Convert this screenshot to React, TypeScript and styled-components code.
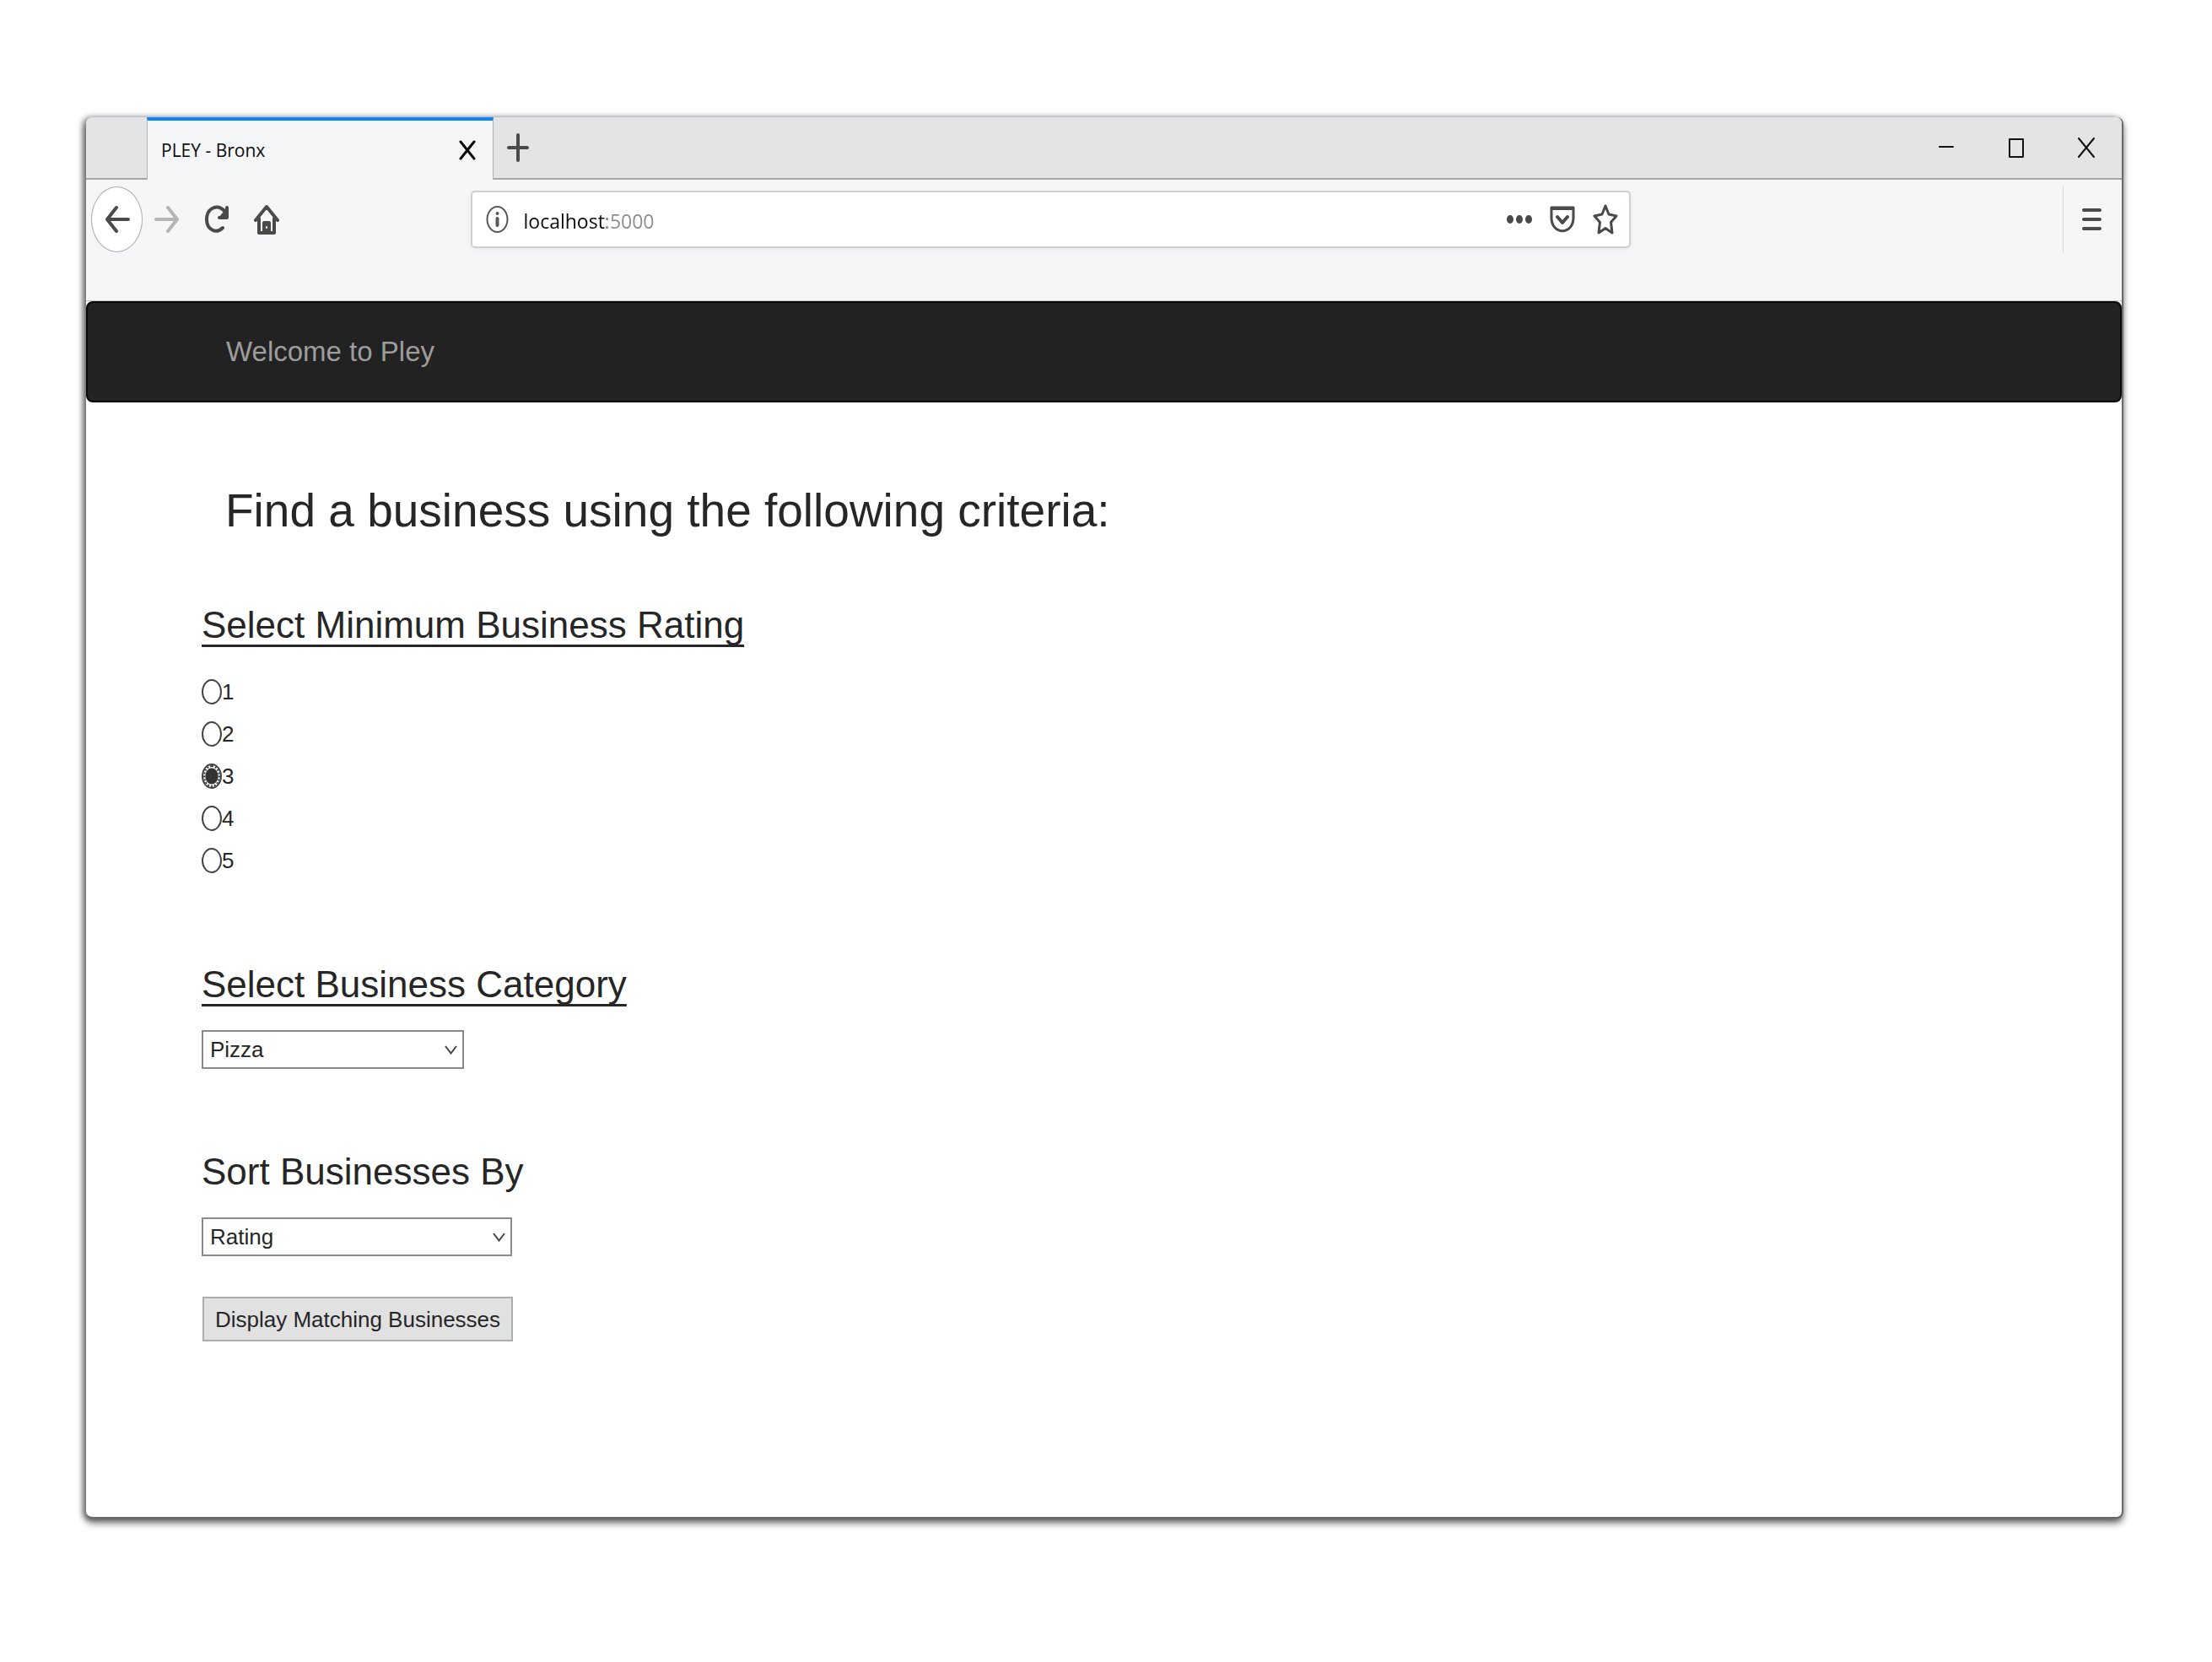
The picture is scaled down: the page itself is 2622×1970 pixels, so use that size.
import React, { useState } from "react";
import styled, { createGlobalStyle } from "styled-components";

const pageFont = `"Liberation Sans", Arial, sans-serif`;
const chromeFont = `"Open Sans", "Noto Sans", sans-serif`;

const GlobalStyle = createGlobalStyle`
  *, *::before, *::after { box-sizing: border-box; }
  body { margin: 0; background: #fff; color: #262626; font-family: ${pageFont}; }
  h1, h2 { margin: 0; font-weight: 400; }
  button, input, select { font: inherit; color: inherit; margin: 0; }
`;

const Desktop = styled.div`
  padding: 139px 105px 172px 102px;
`;

const BrowserWindow = styled.div`
  background: #fff;
  border: solid #6a6a6a;
  border-width: 0 2px 2px 0;
  border-radius: 8px;
  box-shadow: -3px 1px 7px 1px rgba(0, 0, 0, 0.5), 0 6px 9px 0 rgba(0, 0, 0, 0.4);
`;

const TabStrip = styled.div`
  display: flex;
  height: 74px;
  background: #e3e4e6;
  border-radius: 8px 8px 0 0;
`;

const StripFill = styled.div<{ $grow?: boolean }>`
  display: flex;
  align-items: center;
  flex: ${(p) => (p.$grow ? "1" : "0 0 72px")};
  border-bottom: 2px solid #a5a6a9;
`;

const Tab = styled.div`
  display: flex;
  align-items: center;
  justify-content: space-between;
  flex: 0 1 411px;
  padding: 0 20px 0 16px;
  background: #f5f6f8;
  border: 1px solid #b0b1b3;
  border-top: 4px solid #0a84ff;
  border-bottom: 0;
  color: #0c0c0d;
  font: 21px/30px ${chromeFont};
`;

const IconButton = styled.button<{ $width?: number }>`
  display: flex;
  align-items: center;
  justify-content: center;
  flex: none;
  width: ${(p) => p.$width ?? 58}px;
  height: 60px;
  padding: 0;
  border: 0;
  background: none;
  color: #4a4a4b;
`;

const TabClose = styled(IconButton)`
  width: 20px;
  height: 32px;
  color: #0c0c0d;
`;

const BackButton = styled(IconButton)`
  width: 61px;
  height: 78px;
  border: 1px solid #adadae;
  border-radius: 50%;
  background: #fff;
`;

const WindowControls = styled.div`
  display: flex;
  margin-left: auto;
  padding-right: 1px;
`;

const WindowButton = styled(IconButton)`
  width: 83px;
  color: #111;
`;

const Toolbar = styled.div`
  display: flex;
  align-items: center;
  padding: 8px 0 57px 6px;
  background: #f5f6f8;
  border-bottom: 1px solid #c9c9ca;
`;

const Spacer = styled.div<{ $share: number }>`
  flex: ${(p) => p.$share} 1 0;
`;

const AddressBar = styled.div`
  display: flex;
  align-items: center;
  flex: 1350 1 0;
  height: 68px;
  padding: 0 2px 0 16px;
  background: #fff;
  border: 2px solid #cfcfd0;
  border-radius: 5px;
  box-shadow: 0 2px 6px rgba(0, 0, 0, 0.05);
  color: #58585a;
`;

const AddressInput = styled.input`
  flex: 1;
  min-width: 0;
  padding: 4px 0 0;
  margin-left: 18px;
  border: 0;
  outline: 0;
  font: 23px/32px ${chromeFont};
  color: transparent;
  background: linear-gradient(to right, #0c0c0d 98px, #8b8b8d 98px);
  background-clip: text;
  -webkit-background-clip: text;
`;

const MenuSlot = styled.div`
  display: flex;
  align-items: center;
  height: 78px;
  padding: 0 7px 0 4px;
  border-left: 1px solid #d7d8da;
`;

const NavBar = styled.nav`
  padding: 34px 164px;
  background: #222;
  border: 2px solid #080808;
  border-radius: 8px;
`;

const Brand = styled.a`
  display: block;
  color: #9d9d9d;
  font-size: 33px;
  line-height: 48px;
  text-decoration: none;
`;

const Main = styled.main`
  padding: 88px 137px 208px;
`;

const PageTitle = styled.h1`
  padding-left: 28px;
  font-size: 55px;
  line-height: 80px;
`;

const Form = styled.form`
  font-size: 26px;
  line-height: 50px;
`;

const Section = styled.section<{ $gap: number }>`
  padding-top: ${(p) => p.$gap}px;
`;

const SectionTitle = styled.h2<{ $underlined?: boolean }>`
  margin-bottom: 24px;
  font-size: 44px;
  line-height: 60px;
  text-decoration: ${(p) => (p.$underlined ? "underline" : "none")};
  text-decoration-thickness: 3px;
  text-underline-offset: 8px;
  text-decoration-skip-ink: none;
`;

const RadioList = styled.div`
  display: flex;
  flex-direction: column;
  align-items: flex-start;
`;

const RadioLabel = styled.label`
  display: flex;
  align-items: center;
`;

const Radio = styled.input`
  appearance: none;
  width: 24px;
  height: 30px;
  border: 2px solid #444;
  border-radius: 50%;
  background: #fff;

  &:checked {
    background: radial-gradient(8px 10px, #333 90%, #fff 100%);
    outline: 2px dotted #333;
    outline-offset: -4px;
  }
`;

const SelectBox = styled.div<{ $width: number }>`
  position: relative;
  width: ${(p) => p.$width}px;
`;

const Select = styled.select`
  appearance: none;
  display: block;
  width: 100%;
  height: 46px;
  padding: 0 40px 0 8px;
  border: 2px solid #8a8a8a;
  border-radius: 0;
  background: #fff;
  line-height: 40px;
`;

const Chevron = styled.svg`
  position: absolute;
  top: 18px;
  right: 8px;
  pointer-events: none;
`;

const SubmitButton = styled.button`
  display: block;
  width: 368px;
  height: 53px;
  margin: 48px 0 0 1px;
  padding: 0;
  border: 2px solid #adadad;
  background: #e1e1e1;
  line-height: 40px;
  white-space: nowrap;
`;

type IconProps = { w: number; h: number; stroke?: number; children: React.ReactNode };

function Icon({ w, h, stroke = 4, children }: IconProps) {
  return (
    <svg
      width={w}
      height={h}
      viewBox={`0 0 ${w} ${h}`}
      fill="none"
      stroke="currentColor"
      strokeWidth={stroke}
      strokeLinecap="round"
      strokeLinejoin="round"
      aria-hidden="true"
    >
      {children}
    </svg>
  );
}

type DropdownProps = { id: string; width: number; options: string[]; labelledBy: string };

function Dropdown({ id, width, options, labelledBy }: DropdownProps) {
  return (
    <SelectBox $width={width}>
      <Select id={id} aria-labelledby={labelledBy} defaultValue={options[0]}>
        {options.map((option) => (
          <option key={option}>{option}</option>
        ))}
      </Select>
      <Chevron width="15" height="11" viewBox="0 0 15 11" fill="none" stroke="#444" strokeWidth="2">
        <path d="M1 1 L7.5 9.5 L14 1" />
      </Chevron>
    </SelectBox>
  );
}

export default function App() {
  const [rating, setRating] = useState(3);
  const [address, setAddress] = useState("localhost:5000");

  return (
    <Desktop>
      <GlobalStyle />
      <BrowserWindow>
        <TabStrip>
          <StripFill />
          <Tab>
            <span>PLEY - Bronx</span>
            <TabClose type="button" aria-label="Close tab">
              <Icon w={20} h={24} stroke={3}>
                <path d="M2 2 L18 22 M18 2 L2 22" />
              </Icon>
            </TabClose>
          </Tab>
          <StripFill $grow>
            <IconButton type="button" aria-label="New tab">
              <Icon w={26} h={34}>
                <path d="M13 2 V32 M2 17 H24" />
              </Icon>
            </IconButton>
            <WindowControls>
              <WindowButton type="button" aria-label="Minimize">
                <Icon w={18} h={4} stroke={2}>
                  <path d="M1 1 H17" />
                </Icon>
              </WindowButton>
              <WindowButton type="button" aria-label="Maximize">
                <Icon w={18} h={23} stroke={2}>
                  <path d="M1 1 H17 V22 H1 Z" />
                </Icon>
              </WindowButton>
              <WindowButton type="button" aria-label="Close window">
                <Icon w={20} h={24} stroke={2}>
                  <path d="M1 1 L19 23 M19 1 L1 23" />
                </Icon>
              </WindowButton>
            </WindowControls>
          </StripFill>
        </TabStrip>

        <Toolbar>
          <BackButton type="button" aria-label="Back">
            <Icon w={30} h={34}>
              <path d="M28 17 H3 M14 3 L3 17 L14 31" />
            </Icon>
          </BackButton>
          <IconButton type="button" aria-label="Forward" disabled>
            <Icon w={30} h={34}>
              <path d="M2 17 H27 M16 3 L27 17 L16 31" stroke="#b4b5b6" />
            </Icon>
          </IconButton>
          <IconButton type="button" aria-label="Reload" $width={60}>
            <Icon w={30} h={36}>
              <path d="M22 28 C14 36 3 30 3 18 C3 5 15 -1 24 8" />
              <path d="M27 4 V16 H17 Z" fill="currentColor" stroke="none" />
              <path d="M27 4 V16 H18" />
            </Icon>
          </IconButton>
          <IconButton type="button" aria-label="Home">
            <Icon w={30} h={38}>
              <path d="M2 20 L15 4 L28 20 M6 18 V35 H24 V18" />
              <path d="M12 34 V23 H18 V34" fill="currentColor" />
              <path d="M15 28 V29" stroke="#f5f6f8" strokeWidth="2" />
            </Icon>
          </IconButton>
          <Spacer $share={212} />
          <AddressBar>
            <Icon w={27} h={34} stroke={2}>
              <ellipse cx="13.5" cy="17" rx="12" ry="15" />
              <path d="M13.5 16 V24" strokeWidth="4" />
              <path d="M13.5 10 V10.1" strokeWidth="4" />
            </Icon>
            <AddressInput
              aria-label="Address"
              value={address}
              onChange={(event) => setAddress(event.target.value)}
            />
            <IconButton type="button" aria-label="Page actions" $width={51}>
              <Icon w={30} h={10}>
                <g fill="currentColor" stroke="none">
                  <ellipse cx="4" cy="5" rx="4" ry="5" />
                  <ellipse cx="15" cy="5" rx="4" ry="5" />
                  <ellipse cx="26" cy="5" rx="4" ry="5" />
                </g>
              </Icon>
            </IconButton>
            <IconButton type="button" aria-label="Save to Pocket" $width={51}>
              <Icon w={30} h={34}>
                <path d="M2 3 H28 V15 C28 36 2 36 2 15 Z" strokeWidth="3" />
                <path d="M3 4 H27" />
                <path d="M9 14 L15 21 L21 14" />
              </Icon>
            </IconButton>
            <IconButton type="button" aria-label="Bookmark" $width={51}>
              <Icon w={30} h={38} stroke={3}>
                <path d="M15 3 L19 13 L28 15 L21.5 22.500 L23 35 L15 29.500 L7 35 L8.500 22.500 L2 15 L11 13 Z" />
              </Icon>
            </IconButton>
          </AddressBar>
          <Spacer $share={511} />
          <MenuSlot>
            <IconButton type="button" aria-label="Menu">
              <Icon w={23} h={30}>
                <path d="M2 4 H21 M2 15 H21 M2 26 H21" />
              </Icon>
            </IconButton>
          </MenuSlot>
        </Toolbar>

        <NavBar>
          <Brand href="#">Welcome to Pley</Brand>
        </NavBar>

        <Main>
          <PageTitle>Find a business using the following criteria:</PageTitle>
          <Form onSubmit={(event) => event.preventDefault()}>
            <Section $gap={66}>
              <SectionTitle $underlined id="rating-title">
                Select Minimum Business Rating
              </SectionTitle>
              <RadioList role="radiogroup" aria-labelledby="rating-title">
                {[1, 2, 3, 4, 5].map((value) => (
                  <RadioLabel key={value}>
                    <Radio
                      type="radio"
                      name="rating"
                      value={value}
                      checked={rating === value}
                      onChange={() => setRating(value)}
                    />
                    {value}
                  </RadioLabel>
                ))}
              </RadioList>
            </Section>
            <Section $gap={92}>
              <SectionTitle $underlined id="category-title">
                Select Business Category
              </SectionTitle>
              <Dropdown
                id="category"
                width={311}
                options={["Pizza"]}
                labelledBy="category-title"
              />
            </Section>
            <Section $gap={92}>
              <SectionTitle id="sort-title">Sort Businesses By</SectionTitle>
              <Dropdown id="sort" width={368} options={["Rating"]} labelledBy="sort-title" />
            </Section>
            <SubmitButton type="submit">Display Matching Businesses</SubmitButton>
          </Form>
        </Main>
      </BrowserWindow>
    </Desktop>
  );
}
